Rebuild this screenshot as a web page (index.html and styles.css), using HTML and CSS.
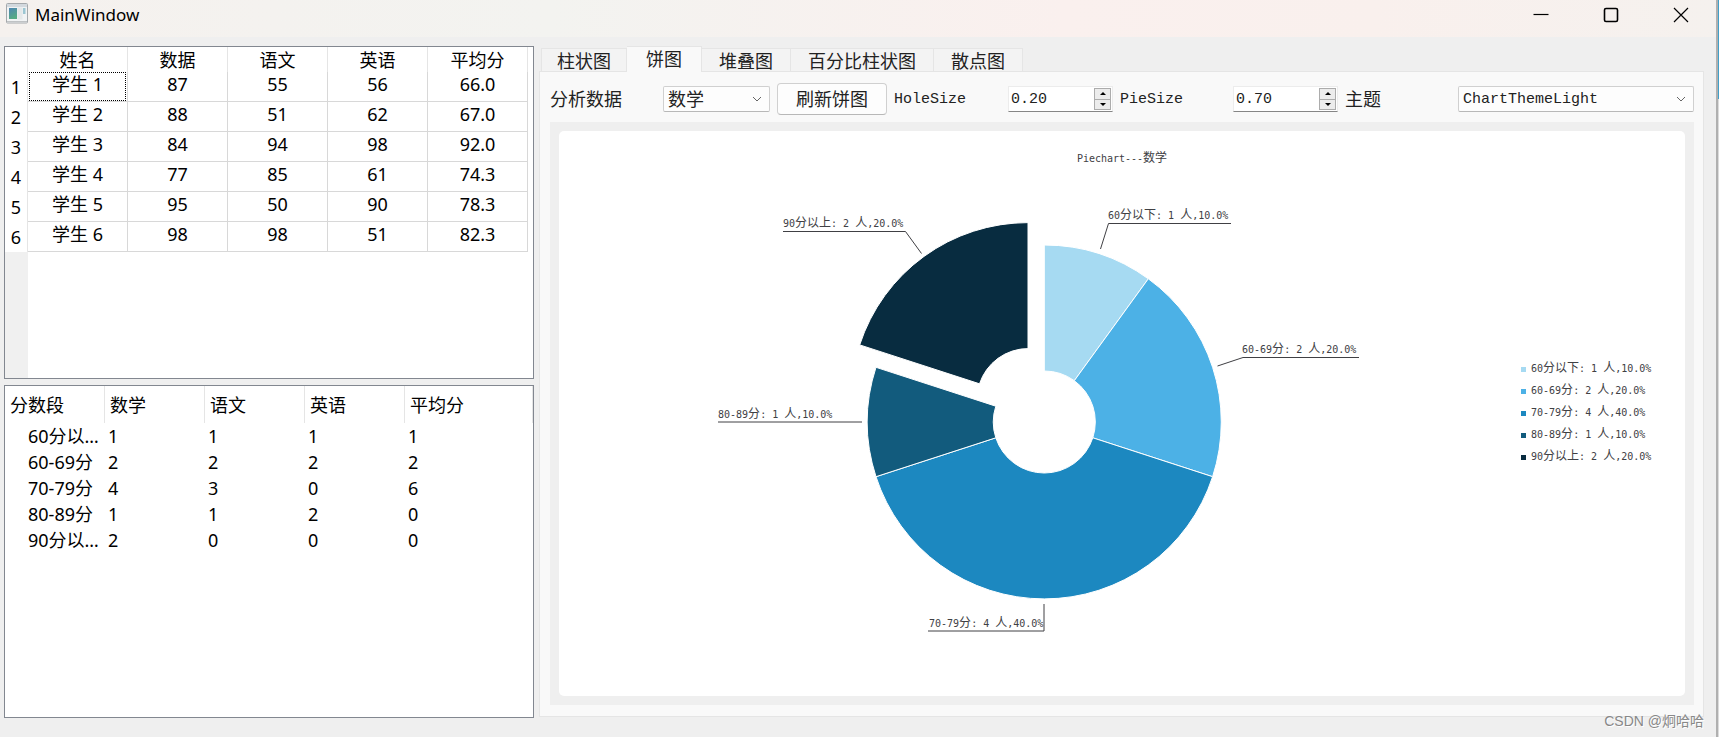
FILE: index.html
```html
<!DOCTYPE html>
<html lang="zh-CN">
<head>
<meta charset="utf-8">
<title>MainWindow</title>
<link rel="stylesheet" href="styles.css">
</head>
<body>
<div class="window">
  <header class="titlebar">
    <svg class="app-icon" viewBox="0 0 22 21" aria-hidden="true">
      <defs><linearGradient id="ico" x1="0" y1="0" x2="0.4" y2="1"><stop offset="0" stop-color="#4f86b4"/><stop offset="1" stop-color="#55ab84"/></linearGradient></defs>
      <rect x="0.5" y="0.5" width="21" height="19.5" rx="1" fill="#f1f3f4" stroke="#a5a9ac"/>
      <rect x="1" y="1" width="20" height="3" fill="#d3d9de"/>
      <rect x="3" y="5" width="8" height="11" fill="url(#ico)"/>
      <rect x="11.5" y="4.5" width="5" height="12" fill="#e4e8e9"/>
      <rect x="17" y="5" width="2.5" height="6" fill="#9cc6d2"/>
      <path d="M1 18.5h20" stroke="#bfc2c4"/>
    </svg>
    <h1 class="title">MainWindow</h1>
    <div class="window-buttons">
      <button type="button" aria-label="Minimize"><svg viewBox="0 0 16 16"><path d="M0.5 7.5h15"/></svg></button>
      <button type="button" aria-label="Maximize"><svg viewBox="0 0 16 16"><rect x="1.5" y="1.5" width="13" height="13" rx="1.5" stroke-width="1.6"/></svg></button>
      <button type="button" aria-label="Close"><svg viewBox="0 0 16 16"><path d="M1 1l14 14M15 1L1 15"/></svg></button>
    </div>
  </header>
  <main class="content">
    <section class="side">
      <div class="frame score-frame">
        <table class="scores">
          <thead><tr><th></th><th>姓名</th><th>数据</th><th>语文</th><th>英语</th><th>平均分</th></tr></thead>
          <tbody>
            <tr><th>1</th><td class="focused"><span>学生 1</span></td><td>87</td><td>55</td><td>56</td><td>66.0</td></tr>
            <tr><th>2</th><td>学生 2</td><td>88</td><td>51</td><td>62</td><td>67.0</td></tr>
            <tr><th>3</th><td>学生 3</td><td>84</td><td>94</td><td>98</td><td>92.0</td></tr>
            <tr><th>4</th><td>学生 4</td><td>77</td><td>85</td><td>61</td><td>74.3</td></tr>
            <tr><th>5</th><td>学生 5</td><td>95</td><td>50</td><td>90</td><td>78.3</td></tr>
            <tr><th>6</th><td>学生 6</td><td>98</td><td>98</td><td>51</td><td>82.3</td></tr>
          </tbody>
        </table>
        <div class="row-header-rest"></div>
      </div>
      <div class="frame">
        <table class="bands">
          <thead><tr><th>分数段</th><th>数学</th><th>语文</th><th>英语</th><th>平均分</th></tr></thead>
          <tbody>
            <tr><td>60分以…</td><td>1</td><td>1</td><td>1</td><td>1</td></tr>
            <tr><td>60-69分</td><td>2</td><td>2</td><td>2</td><td>2</td></tr>
            <tr><td>70-79分</td><td>4</td><td>3</td><td>0</td><td>6</td></tr>
            <tr><td>80-89分</td><td>1</td><td>1</td><td>2</td><td>0</td></tr>
            <tr><td>90分以…</td><td>2</td><td>0</td><td>0</td><td>0</td></tr>
          </tbody>
        </table>
      </div>
    </section>
    <section class="charts">
      <div class="tabs" role="tablist">
        <button type="button" role="tab">柱状图</button>
        <button type="button" role="tab" aria-selected="true">饼图</button>
        <button type="button" role="tab">堆叠图</button>
        <button type="button" role="tab" class="wide">百分比柱状图</button>
        <button type="button" role="tab">散点图</button>
      </div>
      <div class="pane" role="tabpanel">
        <form class="controls">
          <label for="subject">分析数据</label>
          <div class="combo">
            <select id="subject" class="cjk"><option>数学</option></select>
            <svg viewBox="0 0 10 6" aria-hidden="true"><path d="M1 1l4 4 4-4"/></svg>
          </div>
          <button type="button" class="refresh">刷新饼图</button>
          <label for="hole" class="latin">HoleSize</label>
          <div class="spin">
            <input id="hole" type="text" value="0.20">
            <div class="steps">
              <button type="button" aria-label="HoleSize up"><svg viewBox="0 0 6 3"><path d="M0 3l3-3 3 3z"/></svg></button>
              <button type="button" aria-label="HoleSize down"><svg viewBox="0 0 6 3"><path d="M0 0l3 3 3-3z"/></svg></button>
            </div>
          </div>
          <label for="pie" class="latin">PieSize</label>
          <div class="spin">
            <input id="pie" type="text" value="0.70">
            <div class="steps">
              <button type="button" aria-label="PieSize up"><svg viewBox="0 0 6 3"><path d="M0 3l3-3 3 3z"/></svg></button>
              <button type="button" aria-label="PieSize down"><svg viewBox="0 0 6 3"><path d="M0 0l3 3 3-3z"/></svg></button>
            </div>
          </div>
          <label for="theme">主题</label>
          <div class="combo">
            <select id="theme"><option>ChartThemeLight</option></select>
            <svg viewBox="0 0 10 6" aria-hidden="true"><path d="M1 1l4 4 4-4"/></svg>
          </div>
        </form>
        <div class="chart-view">
          <svg class="chart" viewBox="559 131 1126 565" role="img" aria-label="Piechart---数学">
            <text x="1122" y="162" text-anchor="middle">Piechart---<tspan class="c">数学</tspan></text>
            <g stroke="#fff" stroke-width="1">
              <path fill="#a6daf2" d="M1044.3 371V245A177 177 0 0 1 1148.3 278.8L1074.3 380.7A51 51 0 0 0 1044.3 371z"/>
              <path fill="#4cb1e6" d="M1074.3 380.7L1148.3 278.8A177 177 0 0 1 1212.6 476.7L1092.8 437.8A51 51 0 0 0 1074.3 380.7z"/>
              <path fill="#1c88c0" d="M1092.8 437.8L1212.6 476.7A177 177 0 0 1 876 476.7L995.8 437.8A51 51 0 0 0 1092.8 437.8z"/>
              <path fill="#125b7d" d="M995.8 437.8L876 476.7A177 177 0 0 1 876 367.3L995.8 406.2A51 51 0 0 0 995.8 437.8z"/>
              <path fill="#082c40" d="M979.5 383.8L859.7 344.9A177 177 0 0 1 1028 222.6V348.6A51 51 0 0 0 979.5 383.8z"/>
            </g>
            <g class="leaders">
              <path d="M1100.5 249L1108.5 223.5H1231"/>
              <path d="M1217.5 366L1243 357.5H1359"/>
              <path d="M1044 604V631H928"/>
              <path d="M862 422H718"/>
              <path d="M921.5 253.5L905.5 231.5H783"/>
            </g>
            <text x="1108" y="219">60<tspan class="c">分以下</tspan>: 1 <tspan class="c">人</tspan>,10.0%</text>
            <text x="1242" y="353">60-69<tspan class="c">分</tspan>: 2 <tspan class="c">人</tspan>,20.0%</text>
            <text x="929" y="627">70-79<tspan class="c">分</tspan>: 4 <tspan class="c">人</tspan>,40.0%</text>
            <text x="718" y="418">80-89<tspan class="c">分</tspan>: 1 <tspan class="c">人</tspan>,10.0%</text>
            <text x="783" y="227">90<tspan class="c">分以上</tspan>: 2 <tspan class="c">人</tspan>,20.0%</text>
            <g class="legend">
              <rect x="1521" y="367" width="5" height="5" fill="#a6daf2"/>
              <rect x="1521" y="389" width="5" height="5" fill="#4cb1e6"/>
              <rect x="1521" y="411" width="5" height="5" fill="#1c88c0"/>
              <rect x="1521" y="433" width="5" height="5" fill="#125b7d"/>
              <rect x="1521" y="455" width="5" height="5" fill="#082c40"/>
              <text x="1531" y="372">60<tspan class="c">分以下</tspan>: 1 <tspan class="c">人</tspan>,10.0%</text>
              <text x="1531" y="394">60-69<tspan class="c">分</tspan>: 2 <tspan class="c">人</tspan>,20.0%</text>
              <text x="1531" y="416">70-79<tspan class="c">分</tspan>: 4 <tspan class="c">人</tspan>,40.0%</text>
              <text x="1531" y="438">80-89<tspan class="c">分</tspan>: 1 <tspan class="c">人</tspan>,10.0%</text>
              <text x="1531" y="460">90<tspan class="c">分以上</tspan>: 2 <tspan class="c">人</tspan>,20.0%</text>
            </g>
          </svg>
        </div>
      </div>
    </section>
  </main>
</div>
<div class="watermark">CSDN @炯哈哈</div>
</body>
</html>
```
FILE: styles.css
```css
* { box-sizing: border-box; }

body {
  margin: 0;
  min-height: 100vh;
  display: flex;
  background: linear-gradient(#3f9fc8 99px, #dcdcdc 99px);
  font: 18px/24px "Noto Sans", "Noto Sans CJK SC", sans-serif;
  color: #000;
}

button, input, select { font: inherit; color: inherit; margin: 0; }

.window {
  flex: 1;
  display: flex;
  flex-direction: column;
  min-width: 0;
  margin-right: 1px;
  border-right: 2px solid #b0b0b0;
  background: #efefef;
}

.titlebar {
  display: flex;
  height: 37px;
  padding: 3px 20px 0 6px;
  background: linear-gradient(90deg, #f5f1ee, #f3f3f0 32%, #faf0ee 62%, #f9f0ed 80%, #f5f1ee);
}

.app-icon { width: 22px; height: 21px; }

.title {
  margin: 0 auto 0 7px;
  font-size: 17px;
  line-height: 24px;
  font-weight: 400;
}

.window-buttons { display: flex; gap: 54px; padding: 4px 7px 0 0; }

.window-buttons button {
  width: 16px;
  height: 16px;
  padding: 0;
  border: 0;
  background: none;
}

.window-buttons svg {
  display: block;
  fill: none;
  stroke: #000;
  stroke-width: 1.2;
}

.content {
  flex: 1;
  display: grid;
  grid-template-columns: 530px minmax(0, 1fr);
  gap: 5px;
  padding: 9px 12px 19px 4px;
}

.side {
  display: grid;
  grid-template-rows: 1fr 1fr;
  gap: 6px;
}

.frame {
  border: 1px solid #828790;
  background: #fff;
}

.score-frame { display: flex; flex-direction: column; }

.row-header-rest { flex: 1; width: 23px; background: #f0f0f0; }

table { border-collapse: separate; border-spacing: 0; table-layout: fixed; }

th { font-weight: 400; }

.scores { width: 523px; text-align: center; }

.scores th, .scores td {
  padding: 0;
  border-right: 1px solid #d8d8d8;
}

.scores th:first-child { width: 23px; }

.scores thead th {
  height: 25px;
  border-color: #e5e5e5;
}

.scores tbody th {
  height: 30px;
  border-color: #e5e5e5;
}

.scores td {
  height: 30px;
  padding-bottom: 5px;
  border-bottom: 1px solid #d8d8d8;
}

.scores .focused { padding: 0 1px; }

.focused span {
  display: block;
  height: 29px;
  border: 1px dotted #000;
  line-height: 22px;
}

.bands { width: 100%; text-align: left; }

.bands th {
  width: 100px;
  height: 37px;
  padding: 0 5px;
  border-right: 1px solid #e5e5e5;
}

.bands th:last-child { width: auto; }

.bands td {
  height: 26px;
  padding: 0 3px;
  white-space: nowrap;
}

.bands td:first-child { padding: 0 0 0 23px; }

.charts {
  display: flex;
  flex-direction: column;
  min-width: 0;
  margin-bottom: 1px;
}

.tabs {
  display: flex;
  align-items: flex-end;
  height: 25px;
  padding-left: 2px;
}

.tabs button {
  height: 23px;
  padding: 0 17px 1px;
  border: 1px solid #e5e5e5;
  border-width: 1px 1px 0 0;
  background: #f3f3f3;
  font: 18px/20px "Noto Sans CJK SC", sans-serif;
  color: #222;
  white-space: nowrap;
}

.tabs button:first-child { border-left-width: 1px; padding: 0 15px 1px; }

.tabs [aria-selected] {
  z-index: 1;
  height: 26px;
  margin-bottom: -1px;
  padding: 0 19px 4px;
  background: #f9f9f9;
}

.pane {
  flex: 1;
  display: flex;
  flex-direction: column;
  gap: 7px;
  padding: 11px 9px 11px 10px;
  border: 1px solid #e5e5e5;
  background: #f9f9f9;
}

.controls {
  display: grid;
  grid-template-columns:
    minmax(0, 106fr) minmax(0, 107fr) minmax(0, 110fr)
    minmax(0, 107fr) minmax(0, 105fr) minmax(0, 106fr)
    minmax(0, 105fr) minmax(0, 106fr) minmax(0, 236fr);
  align-items: center;
  gap: 7px;
  font: 18px/24px "Noto Sans CJK SC", sans-serif;
  color: #222;
}

.controls label { padding-bottom: 2px; }

.latin, .spin input, .combo select { font: 15px/22px "Liberation Mono", monospace; }

.controls .latin { padding: 2px 0 0; }

.combo { display: grid; align-items: center; }

.combo select, .combo svg { grid-area: 1 / 1; }

.combo select {
  appearance: none;
  width: 100%;
  height: 26px;
  padding: 2px 24px 0 4px;
  border: 1px solid #d0d0d0;
  border-bottom-color: #b8b8b8;
  border-radius: 2px;
  background: #fdfdfd;
}

.combo .cjk {
  padding: 0 24px 2px 4px;
  font: 18px/22px "Noto Sans CJK SC", sans-serif;
}

.combo svg {
  justify-self: end;
  width: 10px;
  height: 6px;
  margin-right: 8px;
  fill: none;
  stroke: #666;
  pointer-events: none;
}

.refresh {
  height: 32px;
  padding: 0 0 2px;
  border: 1px solid #d0d0d0;
  border-bottom-color: #b8b8b8;
  border-radius: 4px;
  background: #fdfdfd;
}

.spin {
  display: flex;
  height: 26px;
  padding: 1px 1px 1px 0;
  border: 1px solid #ececec;
  border-bottom-color: #868686;
  background: #fff;
}

.spin input {
  flex: 1;
  min-width: 0;
  padding: 2px 2px 0;
  border: 0;
  background: none;
}

.steps { display: grid; width: 17px; }

.steps button {
  display: grid;
  place-items: center;
  min-height: 0;
  padding: 0;
  border: 1px solid #acacac;
  background: #ececec;
}

.steps button + button { border-top: 0; }

.steps svg { width: 6px; height: 3px; }

.chart-view {
  flex: 1;
  display: flex;
  padding: 9px;
  background: #efefef;
}

.chart {
  flex: 1;
  min-width: 0;
  border-radius: 5px;
  background: #fff;
  fill: #404044;
  font: 10px "DejaVu Sans Mono", monospace;
  white-space: pre;
}

.c { font: 12px "Noto Sans CJK SC", sans-serif; }

.leaders { fill: none; stroke: #404044; }

.watermark {
  position: absolute;
  right: 15px;
  bottom: 4px;
  font: 14px/24px "Liberation Sans", "Noto Sans CJK SC", sans-serif;
  color: #888;
  text-shadow: 1px 1px 0 #fff;
}
```
